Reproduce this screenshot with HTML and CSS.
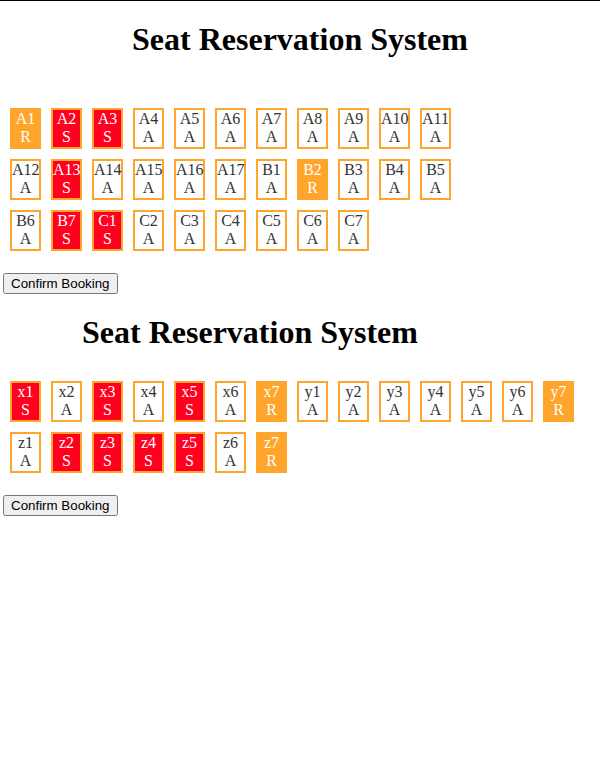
FILE: index.html
```html
<!DOCTYPE html>
<html>
<head>
<meta charset="utf-8">
<link rel="stylesheet" href="styles.css">
</head>
<body>
<div class="topline"></div>
<section class="booking">
  <h1 class="title">Seat Reservation System</h1>
  <div class="seats seats-11">
    <div class="seat reserved">A1<br>R</div>
    <div class="seat sold">A2<br>S</div>
    <div class="seat sold">A3<br>S</div>
    <div class="seat">A4<br>A</div>
    <div class="seat">A5<br>A</div>
    <div class="seat">A6<br>A</div>
    <div class="seat">A7<br>A</div>
    <div class="seat">A8<br>A</div>
    <div class="seat">A9<br>A</div>
    <div class="seat">A10<br>A</div>
    <div class="seat">A11<br>A</div>
    <div class="seat">A12<br>A</div>
    <div class="seat sold">A13<br>S</div>
    <div class="seat">A14<br>A</div>
    <div class="seat">A15<br>A</div>
    <div class="seat">A16<br>A</div>
    <div class="seat">A17<br>A</div>
    <div class="seat">B1<br>A</div>
    <div class="seat reserved">B2<br>R</div>
    <div class="seat">B3<br>A</div>
    <div class="seat">B4<br>A</div>
    <div class="seat">B5<br>A</div>
    <div class="seat">B6<br>A</div>
    <div class="seat sold">B7<br>S</div>
    <div class="seat sold">C1<br>S</div>
    <div class="seat">C2<br>A</div>
    <div class="seat">C3<br>A</div>
    <div class="seat">C4<br>A</div>
    <div class="seat">C5<br>A</div>
    <div class="seat">C6<br>A</div>
    <div class="seat">C7<br>A</div>
  </div>
  <button class="confirm">Confirm Booking</button>
</section>
<section class="booking second">
  <h1 class="title title-narrow">Seat Reservation System</h1>
  <div class="seats seats-14">
    <div class="seat sold">x1<br>S</div>
    <div class="seat">x2<br>A</div>
    <div class="seat sold">x3<br>S</div>
    <div class="seat">x4<br>A</div>
    <div class="seat sold">x5<br>S</div>
    <div class="seat">x6<br>A</div>
    <div class="seat reserved">x7<br>R</div>
    <div class="seat">y1<br>A</div>
    <div class="seat">y2<br>A</div>
    <div class="seat">y3<br>A</div>
    <div class="seat">y4<br>A</div>
    <div class="seat">y5<br>A</div>
    <div class="seat">y6<br>A</div>
    <div class="seat reserved">y7<br>R</div>
    <div class="seat">z1<br>A</div>
    <div class="seat sold">z2<br>S</div>
    <div class="seat sold">z3<br>S</div>
    <div class="seat sold">z4<br>S</div>
    <div class="seat sold">z5<br>S</div>
    <div class="seat">z6<br>A</div>
    <div class="seat reserved">z7<br>R</div>
  </div>
  <button class="confirm">Confirm Booking</button>
</section>
</body>
</html>
```

FILE: styles.css
```css
html, body {
  margin: 0;
  padding: 0;
  background: #fff;
}
body {
  font-family: "Liberation Serif", "Times New Roman", serif;
  color: #000;
}
.topline {
  height: 1px;
  background: #000;
}
.booking {
  display: flex;
  flex-direction: column;
  align-items: flex-start;
}
.title {
  margin: 20px 0 0 0;
  width: 600px;
  font-size: 32px;
  line-height: 37px;
  font-weight: bold;
  text-align: center;
}
.title-narrow {
  width: 500px;
}
.seats {
  display: grid;
  gap: 10px;
  margin: 50px 0 0 10px;
}
.seats-11 {
  grid-template-columns: repeat(11, 31px);
}
.seats-14 {
  grid-template-columns: repeat(14, 31px);
}
.second .seats {
  margin-top: 30px;
}
.seat {
  box-sizing: border-box;
  width: 31px;
  height: 41px;
  border: 2px solid #ffa52c;
  background: #fff;
  color: #333;
  font-size: 16px;
  line-height: 18.4px;
  text-align: center;
  white-space: nowrap;
}
.seat.reserved {
  background: #ffa52c;
  color: #fff;
}
.seat.sold {
  background: #ff001f;
  color: #fff;
}
.confirm {
  display: block;
  margin: 22px 0 0 3px;
  font: 13.333px "Liberation Sans", Arial, sans-serif;
}
```
